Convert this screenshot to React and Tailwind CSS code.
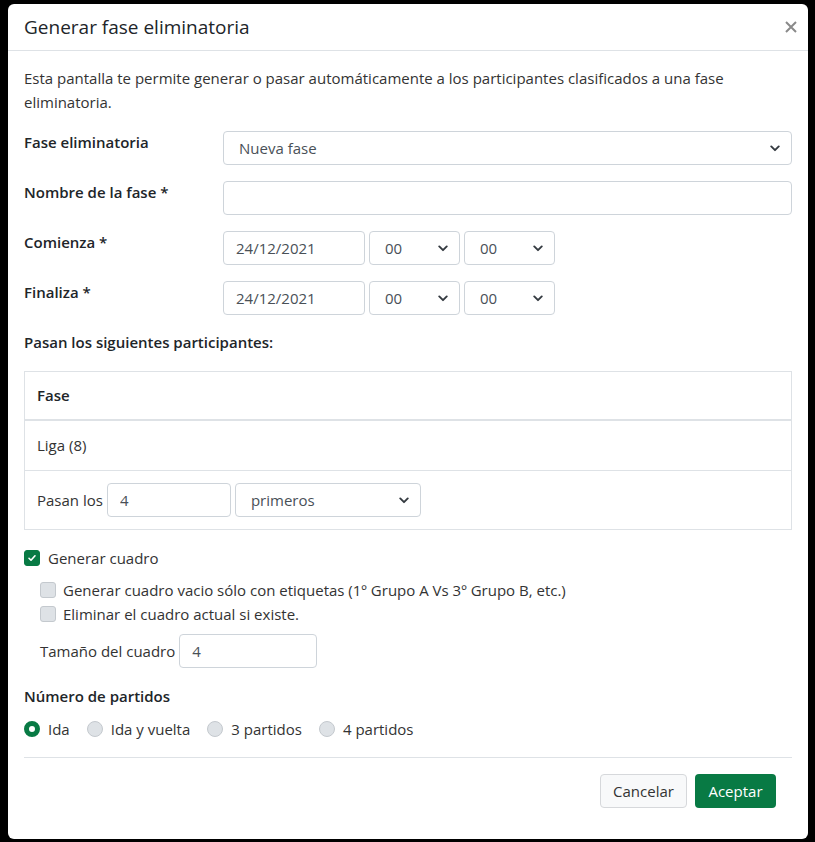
import { useState } from "react";

function Chevron() {
  return (
    <svg className="pointer-events-none absolute right-[12px] top-1/2 -translate-y-1/2" width="10" height="8" viewBox="0 0 16 12">
      <path d="M2 3.5l6 6 6-6" fill="none" stroke="#343a40" strokeWidth="3" strokeLinecap="round" strokeLinejoin="round" />
    </svg>
  );
}

function Select({ value, options, className = "" }) {
  return (
    <div className={`relative h-[34px] ${className}`}>
      <select
        defaultValue={value}
        className="h-full w-full appearance-none rounded-[4px] border border-[#ced4da] bg-white pl-[15px] pr-8 text-[15px] text-[#495057] outline-none"
      >
        {options.map((o) => <option key={o}>{o}</option>)}
      </select>
      <Chevron />
    </div>
  );
}

function TextInput({ value = "", className = "" }) {
  return (
    <input
      defaultValue={value}
      className={`h-[34px] rounded-[4px] border border-[#ced4da] bg-white px-[12px] text-[15px] text-[#495057] outline-none ${className}`}
    />
  );
}

function Check({ checked, onClick }) {
  return (
    <span
      onClick={onClick}
      className={`flex h-[16px] w-[16px] shrink-0 items-center justify-center rounded-[3px] border ${checked ? "border-[#087a44] bg-[#087a44]" : "border-[#c4c9ce] bg-[#dee2e6]"}`}
    >
      {checked && (
        <svg width="10" height="10" viewBox="0 0 20 20">
          <path d="M4 10.5l4 4 8-9" fill="none" stroke="#fff" strokeWidth="3.2" strokeLinecap="round" strokeLinejoin="round" />
        </svg>
      )}
    </span>
  );
}

function Radio({ checked, label, onClick }) {
  return (
    <label onClick={onClick} className="flex items-center gap-[8px]">
      <span
        className={`h-[16px] w-[16px] shrink-0 rounded-full ${checked ? "border-[5px] border-[#087a44] bg-white" : "border border-[#c4c9ce] bg-[#dee2e6]"}`}
      />
      <span>{label}</span>
    </label>
  );
}

const FIELD_ROWS = [
  ["Fase eliminatoria", "select"],
  ["Nombre de la fase *", "text"],
  ["Comienza *", "date"],
  ["Finaliza *", "date"]
];

export default function App() {
  const [cuadro, setCuadro] = useState(true);
  const [vacio, setVacio] = useState(false);
  const [eliminar, setEliminar] = useState(false);
  const [partidos, setPartidos] = useState("Ida");
  const hours = ["00", "01", "02", "03"];

  return (
    <div className="min-h-screen bg-black pl-[8px] pt-[4px]" style={{ fontFamily: "'Open Sans', Lato, sans-serif" }}>
      <div className="w-[800px] rounded-[6px] bg-white text-[15px] text-[#333]">
        <div className="flex h-[47px] items-center justify-between border-b border-[#dee2e6] pl-[16px] pr-[11px]">
          <h1 className="pt-[1px] text-[19px] text-[#212529]">Generar fase eliminatoria</h1>
          <svg width="12" height="12" viewBox="0 0 12 12">
            <path d="M1 1l10 10M11 1L1 11" stroke="#8a8a8a" strokeWidth="2" />
          </svg>
        </div>

        <div className="px-[16px] pt-[15px] pb-[31px]">
          <p className="mb-[17px] leading-[24px]">
            Esta pantalla te permite generar o pasar automáticamente a los participantes clasificados a una fase eliminatoria.
          </p>

          {FIELD_ROWS.map(([label, kind]) => (
            <div key={label} className="mb-[16px] grid grid-cols-[199px_1fr]">
              <div className="font-semibold leading-[22px] text-[#212529]">{label}</div>
              {kind === "select" && <Select value="Nueva fase" options={["Nueva fase"]} />}
              {kind === "text" && <TextInput className="w-full" />}
              {kind === "date" && (
                <div className="flex gap-[4px]">
                  <TextInput value="24/12/2021" className="w-[142px]" />
                  <Select value="00" options={hours} className="w-[91px]" />
                  <Select value="00" options={hours} className="w-[91px]" />
                </div>
              )}
            </div>
          ))}

          <div className="mb-[18px] font-semibold leading-[22px] text-[#212529]">Pasan los siguientes participantes:</div>

          <div className="border border-[#dee2e6]">
            <div className="flex h-[49px] items-center border-b-2 border-[#dee2e6] px-[12px] font-semibold text-[#212529]">Fase</div>
            <div className="flex h-[50px] items-center border-b border-[#dee2e6] px-[12px]">Liga (8)</div>
            <div className="flex h-[58px] items-center gap-[4px] px-[12px]">
              <span>Pasan los</span>
              <TextInput value="4" className="w-[124px]" />
              <Select value="primeros" options={["primeros", "últimos"]} className="w-[186px]" />
            </div>
          </div>

          <label className="mt-[17px] flex h-[22px] items-center gap-[8px]">
            <Check checked={cuadro} onClick={() => setCuadro((v) => !v)} />
            <span>Generar cuadro</span>
          </label>

          <div className="mt-[9px] pl-[16px]">
            <label className="flex h-[24px] items-center gap-[7px]">
              <Check checked={vacio} onClick={() => setVacio((v) => !v)} />
              <span>Generar cuadro vacio sólo con etiquetas (1º Grupo A Vs 3º Grupo B, etc.)</span>
            </label>
            <label className="flex h-[24px] items-center gap-[7px]">
              <Check checked={eliminar} onClick={() => setEliminar((v) => !v)} />
              <span>Eliminar el cuadro actual si existe.</span>
            </label>
            <div className="mt-[8px] flex items-center gap-[4px]">
              <span>Tamaño del cuadro</span>
              <TextInput value="4" className="w-[138px]" />
            </div>
          </div>

          <div className="mt-[17px] font-semibold leading-[22px] text-[#212529]">Número de partidos</div>
          <div className="mt-[11px] flex h-[22px] items-center gap-[17px]">
            {["Ida", "Ida y vuelta", "3 partidos", "4 partidos"].map((p) => (
              <Radio key={p} label={p} checked={partidos === p} onClick={() => setPartidos(p)} />
            ))}
          </div>

          <div className="mt-[17px] border-t border-[#dee2e6]" />

          <div className="mt-[16px] flex justify-end gap-[8px] pr-[16px]">
            <button type="button" className="h-[34px] w-[87px] rounded-[4px] border border-[#d6d8db] bg-[#f8f9fa] text-[#333]">
              Cancelar
            </button>
            <button type="button" className="h-[34px] w-[81px] rounded-[4px] bg-[#087a44] text-white">
              Aceptar
            </button>
          </div>
        </div>
      </div>
    </div>
  );
}
